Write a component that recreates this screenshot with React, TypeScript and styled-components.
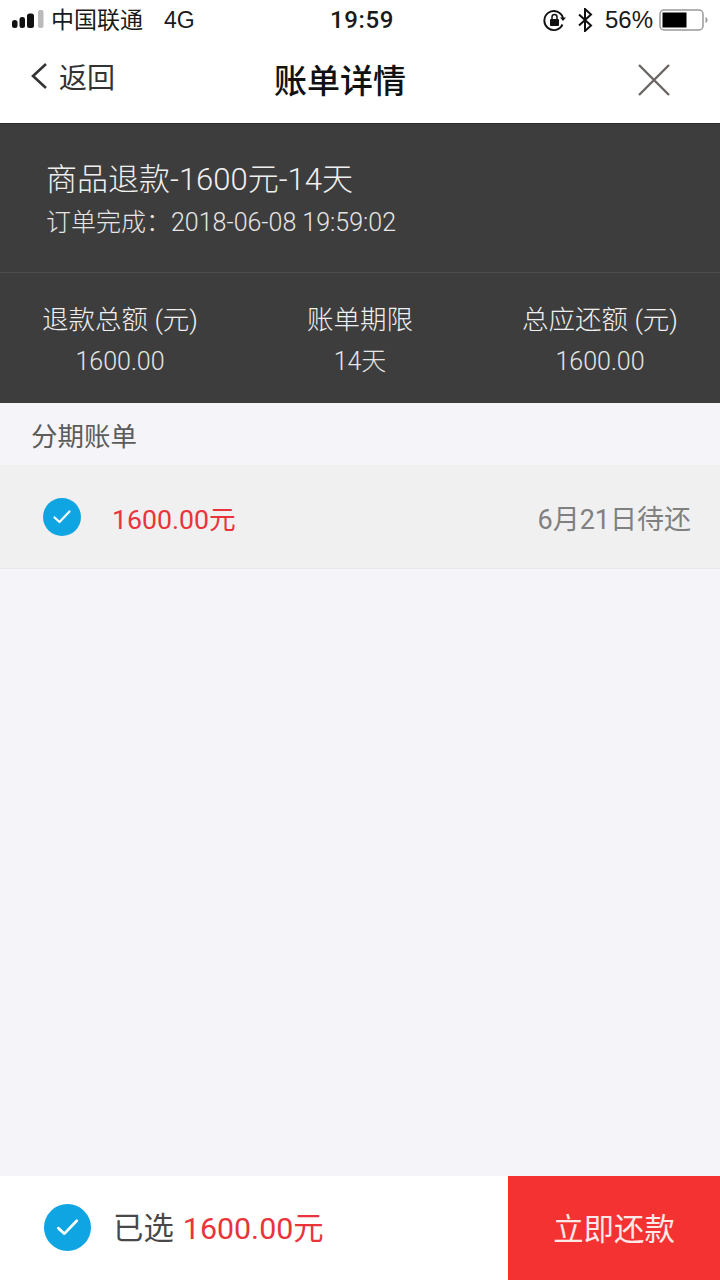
import React from 'react';
import styled, { createGlobalStyle } from 'styled-components';

const SANS = `"Liberation Sans", "Noto Sans CJK SC", sans-serif`;
const LIGHT = `Roboto, "Noto Sans CJK SC", sans-serif`;

const GlobalStyle = createGlobalStyle`
  html, body {
    margin: 0;
    padding: 0;
    background: #f4f4f9;
  }
  * {
    box-sizing: border-box;
  }
`;

const Page = styled.div`
  width: 720px;
  height: 1280px;
  display: flex;
  flex-direction: column;
  font-family: ${LIGHT};
  font-weight: 300;
  background: #f4f4f9;
  overflow: hidden;
`;

const Top = styled.header`
  height: 123px;
  background: #fff;
  display: flex;
  flex-direction: column;
  font-family: ${SANS};
  font-weight: 400;
`;

const StatusBar = styled.div`
  height: 40px;
  padding: 0 12px;
  display: flex;
  align-items: center;
  justify-content: space-between;
  color: #1a1a1a;
  font-size: 23px;
`;

const StatusLeft = styled.div`
  width: 288px;
  display: flex;
  align-items: center;
`;

const StatusRight = styled.div`
  width: 284px;
  display: flex;
  align-items: center;
  justify-content: flex-end;
`;

const Carrier = styled.span`
  margin: 0 0 4px 7px;
`;

const Network = styled.span`
  margin-left: 21px;
`;

const Clock = styled.span`
  font-family: Roboto, sans-serif;
  font-weight: 500;
  font-size: 24px;
  letter-spacing: 0.6px;
`;

const StatusIcon = styled.span`
  margin-left: ${(p: { $gap: number }) => p.$gap}px;
  display: flex;
`;

const Percent = styled.span`
  margin-left: 12px;
  font-size: 24px;
`;

const NavBar = styled.div`
  height: 83px;
  padding: 0 50px 6px 30px;
  display: flex;
  align-items: center;
`;

const NavSide = styled.div`
  flex: 1;
  display: flex;
  align-items: center;
`;

const BackLink = styled(NavSide)`
  gap: 11px;
  font-size: 28px;
  color: #333;
  margin-top: -6px;
`;

const Title = styled.h1`
  margin: 0 20px 0 0;
  font-size: 33px;
  font-weight: 500;
  color: #111;
`;

const CloseBox = styled(NavSide)`
  justify-content: flex-end;
  margin-top: 2px;
`;

const Summary = styled.section`
  height: 280px;
  background: #3d3d3d;
  border-top: 1px solid #2c2c2c;
  display: flex;
  flex-direction: column;
  color: #f0f0f0;
`;

const OrderInfo = styled.div`
  height: 149px;
  padding: 37px 0 0 46px;
  border-bottom: 1px solid #4d4d4d;
`;

const OrderName = styled.div`
  font-size: 31px;
  line-height: 38px;
`;

const OrderTime = styled.div`
  margin-top: 8px;
  font-size: 25px;
  line-height: 32px;
  color: #e6e6e6;
`;

const Stats = styled.div`
  flex: 1;
  display: grid;
  grid-template-columns: repeat(3, 1fr);
  padding-top: 29px;
`;

const Stat = styled.div`
  display: flex;
  flex-direction: column;
  align-items: center;
`;

const StatLabel = styled.div`
  font-size: 26.5px;
  line-height: 36px;
  white-space: nowrap;
`;

const StatValue = styled.div`
  margin-top: 8px;
  font-size: 25px;
  line-height: 32px;
  color: #e6e6e6;
`;

const SectionTitle = styled.div`
  height: 62px;
  padding-left: 31px;
  display: flex;
  align-items: center;
  font-size: 26.5px;
  font-weight: 400;
  color: #5c5c5c;
`;

const BillRow = styled.div`
  height: 104px;
  padding: 0 29px 0 43px;
  background: #f0f0f0;
  border-bottom: 1px solid #e8e8e8;
  display: flex;
  align-items: center;
`;

const RowText = styled.span`
  display: block;
  margin-top: 2px;
  font-size: 27px;
  font-weight: 400;
`;

const Amount = styled(RowText)`
  margin-left: 31px;
  font-size: 26.7px;
  color: #e8343a;
`;

const DueDate = styled(RowText)`
  margin-left: auto;
  color: #808080;
`;

const Spacer = styled.div`
  flex: 1;
`;

const Footer = styled.footer`
  height: 104px;
  background: #fff;
  display: flex;
  align-items: stretch;
`;

const Selected = styled.div`
  flex: 1;
  padding: 0 0 2px 44px;
  display: flex;
  align-items: center;
  font-size: 30.4px;
  font-weight: 400;
  color: #484848;
`;

const SelectedLabel = styled.span`
  margin: 0 0 2px 22px;
`;

const SelectedAmount = styled.span`
  margin: 0 0 2px 9px;
  color: #e8343a;
`;

const PayButton = styled.button`
  width: 212px;
  border: 0;
  padding: 0 0 2px;
  background: #f43232;
  color: #fde8e8;
  font-family: ${LIGHT};
  font-weight: 400;
  font-size: 30.4px;
`;

const CheckCircle = ({ size }: { size: number }) => (
  <svg width={size} height={size} viewBox="0 0 38 38">
    <circle cx="19" cy="19" r="19" fill="#0fa5e2" />
    <path d="M11.500 19.500l5 4.500L26.500 13.500" fill="none" stroke="#fff" strokeWidth="2.200" strokeLinecap="round" strokeLinejoin="round" />
  </svg>
);

const Signal = () => (
  <svg width="32" height="20" viewBox="0 0 32 20">
    <rect x="0" y="10" width="5.500" height="8" rx="2.500" fill="#111" />
    <rect x="7.500" y="7" width="5.500" height="11" rx="2.500" fill="#111" />
    <rect x="15" y="3.500" width="7" height="14.500" rx="2.500" fill="#111" />
    <rect x="26" y="0" width="5.500" height="18" rx="2" fill="#bbb" />
  </svg>
);

const RotationLock = () => (
  <svg width="23" height="23" viewBox="0 0 23 23" fill="none">
    <path d="M19.500 15.500A9.500 9.500 0 1 1 20 9" stroke="#111" strokeWidth="1.900" />
    <path d="M17 8.500h6l-3 3.600z" fill="#111" />
    <rect x="7" y="10" width="9" height="7" rx="1" fill="#111" />
    <path d="M9 10V8a2.500 2.500 0 0 1 5 0v2" stroke="#111" strokeWidth="1.500" />
  </svg>
);

const Bluetooth = () => (
  <svg width="16" height="24" viewBox="0 0 16 24" fill="none">
    <path d="M2 6.500l12 11L8 23V1l6 5.500-12 11" stroke="#111" strokeWidth="2" />
  </svg>
);

const BatteryIcon = () => (
  <svg width="49" height="24" viewBox="0 0 49 24">
    <rect x="1" y="2" width="43" height="20" rx="4" fill="none" stroke="#999" strokeWidth="1.500" />
    <rect x="3.500" y="4.500" width="24" height="15" fill="#000" />
    <path d="M46.500 9c1.400.4 2 1.600 2 3s-.6 2.600-2 3z" fill="#999" />
  </svg>
);

const BackArrow = () => (
  <svg width="18" height="28" viewBox="0 0 18 28" fill="none">
    <path d="M16 2L3 14l13 12" stroke="#333" strokeWidth="2.600" />
  </svg>
);

const CloseIcon = () => (
  <svg width="32" height="32" viewBox="0 0 32 32" fill="none">
    <path d="M1 1l30 30M31 1L1 31" stroke="#6b6563" strokeWidth="2.400" />
  </svg>
);

const stats = [
  { label: '退款总额 (元)', value: '1600.00' },
  { label: '账单期限', value: '14天' },
  { label: '总应还额 (元)', value: '1600.00' },
];

export default function App() {
  return (
    <Page>
      <GlobalStyle />
      <Top>
        <StatusBar>
          <StatusLeft>
            <Signal />
            <Carrier>中国联通</Carrier>
            <Network>4G</Network>
          </StatusLeft>
          <Clock>19:59</Clock>
          <StatusRight>
            <RotationLock />
            <StatusIcon $gap={11}>
              <Bluetooth />
            </StatusIcon>
            <Percent>56%</Percent>
            <StatusIcon $gap={6}>
              <BatteryIcon />
            </StatusIcon>
          </StatusRight>
        </StatusBar>
        <NavBar>
          <BackLink>
            <BackArrow />
            返回
          </BackLink>
          <Title>账单详情</Title>
          <CloseBox>
            <CloseIcon />
          </CloseBox>
        </NavBar>
      </Top>
      <Summary>
        <OrderInfo>
          <OrderName>商品退款-1600元-14天</OrderName>
          <OrderTime>订单完成：2018-06-08 19:59:02</OrderTime>
        </OrderInfo>
        <Stats>
          {stats.map(s => (
            <Stat key={s.label}>
              <StatLabel>{s.label}</StatLabel>
              <StatValue>{s.value}</StatValue>
            </Stat>
          ))}
        </Stats>
      </Summary>
      <SectionTitle>分期账单</SectionTitle>
      <BillRow>
        <CheckCircle size={38} />
        <Amount>1600.00元</Amount>
        <DueDate>6月21日待还</DueDate>
      </BillRow>
      <Spacer />
      <Footer>
        <Selected>
          <CheckCircle size={47} />
          <SelectedLabel>已选</SelectedLabel>
          <SelectedAmount>1600.00元</SelectedAmount>
        </Selected>
        <PayButton>立即还款</PayButton>
      </Footer>
    </Page>
  );
}
